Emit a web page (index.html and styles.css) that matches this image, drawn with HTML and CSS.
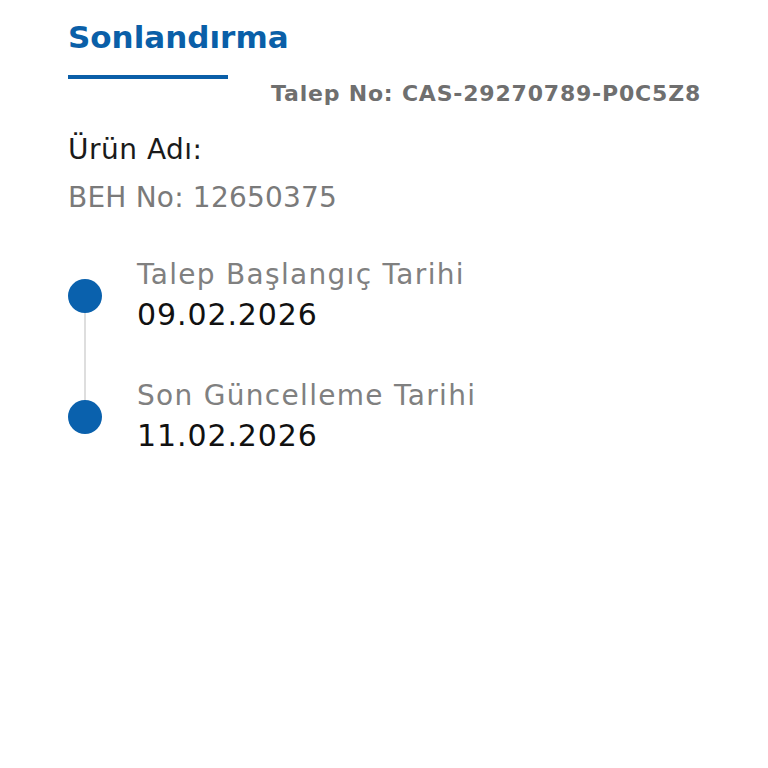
FILE: index.html
```html
<!DOCTYPE html>
<html lang="tr">
<head>
  <meta charset="UTF-8">
  <meta name="viewport" content="width=device-width, initial-scale=1.0">
  <title>Sonlandırma</title>
  <link rel="stylesheet" href="styles.css">
</head>
<body>
  <div class="page">
    <div class="header">
      <h1 class="title">Sonlandırma</h1>
      <div class="title-bar"></div>
      <div class="case-no">Talep No: CAS-29270789-P0C5Z8</div>
    </div>

    <div class="product">
      <div class="product-name">Ürün Adı:</div>
      <div class="product-beh">BEH No: 12650375</div>
    </div>

    <div class="timeline">
      <div class="tl-item">
        <div class="tl-dot"></div>
        <div class="tl-text">
          <div class="tl-label">Talep Başlangıç Tarihi</div>
          <div class="tl-date">09.02.2026</div>
        </div>
      </div>
      <div class="tl-item">
        <div class="tl-dot"></div>
        <div class="tl-text">
          <div class="tl-label">Son Güncelleme Tarihi</div>
          <div class="tl-date">11.02.2026</div>
        </div>
      </div>
    </div>
  </div>
</body>
</html>
```

FILE: styles.css
```css
body {
  margin: 0;
  background: #fff;
  font-family: "DejaVu Sans", "Open Sans", sans-serif;
  color: #1a1a1a;
}

.page {
  padding: 13px 68px 0 68px;
}

.header {
  display: flex;
  flex-direction: column;
}

.title {
  margin: 0;
  font-size: 31px;
  line-height: 48px;
  font-weight: 700;
  color: #0a5fa8;
}

.title-bar {
  width: 160px;
  height: 4px;
  margin-top: 14px;
  background: #0a5fa8;
}

.case-no {
  align-self: flex-end;
  font-size: 22px;
  line-height: 30px;
  font-weight: 700;
  letter-spacing: 0.8px;
  color: #6f6f6f;
  margin-right: -1px;
}

.product {
  margin-top: 17px;
}

.product-name {
  font-size: 28px;
  line-height: 48px;
  letter-spacing: 0.5px;
  color: #1a1a1a;
}

.product-beh {
  font-size: 28px;
  line-height: 48px;
  letter-spacing: 0.2px;
  color: #7a7a7a;
}

.timeline {
  margin-top: 13px;
}

.tl-item {
  display: flex;
  align-items: center;
  gap: 35px;
  height: 121px;
  position: relative;
}

.tl-item:first-child::after {
  content: "";
  position: absolute;
  left: 16px;
  top: 60px;
  width: 2px;
  height: 121px;
  background: #dedede;
}

.tl-dot {
  width: 34px;
  height: 34px;
  border-radius: 50%;
  background: #0a61ad;
  position: relative;
  z-index: 1;
  flex: none;
}

.tl-label {
  font-size: 28px;
  line-height: 38px;
  letter-spacing: 1.3px;
  color: #808080;
}

.tl-date {
  font-size: 30px;
  line-height: 42px;
  letter-spacing: 0.9px;
  color: #111;
}
```
